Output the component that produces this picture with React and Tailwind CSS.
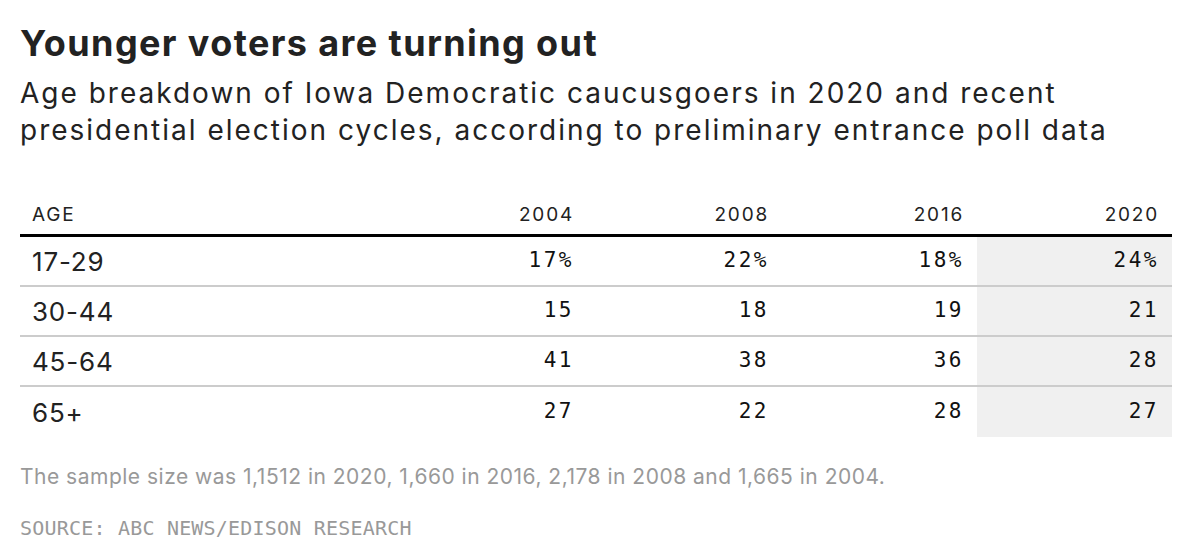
const years = ['2004', '2008', '2016', '2020'];

const rows = [
  { age: '17-29', values: ['17%', '22%', '18%', '24%'] },
  { age: '30-44', values: ['15', '18', '19', '21'] },
  { age: '45-64', values: ['41', '38', '36', '28'] },
  { age: '65+', values: ['27', '22', '28', '27'] },
];

const sans = "font-['Inter','Liberation_Sans',sans-serif]";
const mono = "font-['DejaVu_Sans_Mono','Liberation_Mono',monospace]";

function App() {
  return (
    <div className={`min-h-[556px] w-[1200px] bg-white px-5 pt-[22px] text-[#222] ${sans}`}>
      <h1 className="text-[36px] font-bold leading-[43px] tracking-[1.4px]">
        Younger voters are turning out
      </h1>
      <p className="mt-[10px] max-w-[1130px] text-[28px] leading-[37px] tracking-[2px]">
        Age breakdown of Iowa Democratic caucusgoers in 2020 and recent presidential election
        cycles, according to preliminary entrance poll data
      </p>

      <div className="mt-[54px] w-[1152px]">
        <div className="grid grid-cols-[372px_195px_195px_195px_195px] border-b-[3px] border-black pb-[7px] text-[19px] leading-[24px] tracking-[1.8px]">
          <div className="pl-3">AGE</div>
          {years.map((year) => (
            <div key={year} className="pr-[13px] text-right">
              {year}
            </div>
          ))}
        </div>

        {rows.map((row, i) => (
          <div
            key={row.age}
            className={`grid h-[50px] grid-cols-[372px_195px_195px_195px_195px] ${
              i < rows.length - 1 ? 'border-b-2 border-[#ccc]' : 'h-[48px]'
            }`}
          >
            <div className="flex items-center pl-3 text-[26px] tracking-[0.8px]">{row.age}</div>
            {row.values.map((value, j) => (
              <div
                key={j}
                className={`flex items-center justify-end pr-[13px] text-[21px] tracking-[2.5px] text-[#111] ${mono} ${
                  j === 3 ? 'bg-[#f0f0f0]' : ''
                }`}
              >
                {value}
              </div>
            ))}
          </div>
        ))}
      </div>

      <p className="mt-[26px] text-[21px] leading-[28px] tracking-[0.5px] text-[#999]">
        The sample size was 1,1512 in 2020, 1,660 in 2016, 2,178 in 2008 and 1,665 in 2004.
      </p>
      <p className={`mt-[25px] text-[20px] leading-[24px] tracking-[0.2px] text-[#999] ${mono}`}>
        SOURCE: ABC NEWS/EDISON RESEARCH
      </p>
    </div>
  );
}

export default App;
